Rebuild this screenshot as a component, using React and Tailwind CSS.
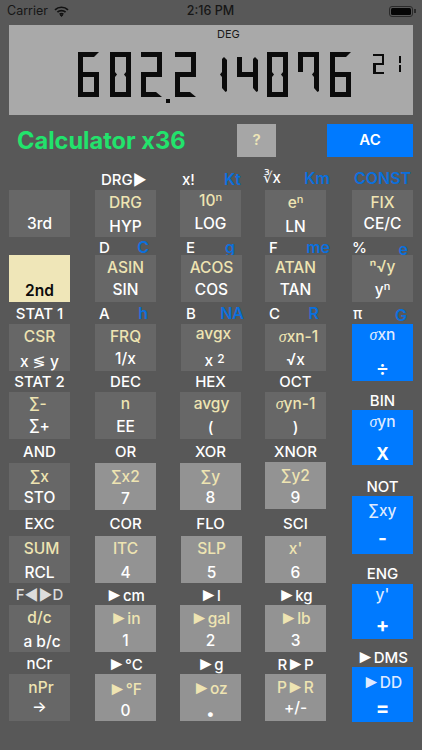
import React from "react";

const INK = "bg-[#0b0b0b]";
const STUB_L = "w-[7px] h-[5px] bg-[#0b0b0b] [clip-path:polygon(0_0,5px_0,7px_2.5px,5px_5px,0_5px)]";
const STUB_R = "w-[7px] h-[5px] bg-[#0b0b0b] [clip-path:polygon(7px_0,2px_0,0_2.5px,2px_5px,7px_5px)]";
const TAPER_TOP = "[clip-path:polygon(2px_0,5px_3px,5px_100%,0_100%,0_2px)]";
const TAPER_BOT = "[clip-path:polygon(0_0,5px_0,5px_calc(100%_-_1px),3.5px_100%,0_calc(100%_-_4px))]";
const CHAMFER_A = "[clip-path:polygon(0_0,21px_0,16px_5px,0_5px)]";
const CHAMFER_D = "[clip-path:polygon(0_0,15px_0,21px_5px,0_5px)]";

const DIGITS = {
  6: { a: CHAMFER_A, f: "", g: "", e: "", c: "", d: "" },
  0: { a: "", b: "", c: "", d: "", e: "", f: "", sl: true, sr: true },
  2: { a: "", b: "", g: "", e: "", d: CHAMFER_D },
  1: { b: TAPER_TOP, c: TAPER_BOT, sr: true },
  4: { f: "", b: TAPER_TOP, g: "", c: TAPER_BOT },
  7: { a: "", b: "", c: TAPER_BOT, f: "", sr: true },
};

function Digit({ ch, className = "" }) {
  const s = DIGITS[ch];
  const v = (k) => `w-[5px] h-full ${k in s ? `${INK} ${s[k]}` : ""}`;
  return (
    <div className={`w-[21px] h-[45px] flex flex-col shrink-0 ${className}`}>
      <div className={`h-[5px] ${"a" in s ? `${INK} ${s.a}` : ""}`} />
      <div className="h-[15px] flex justify-between">
        <div className={v("f")} />
        <div className={v("b")} />
      </div>
      {"g" in s ? (
        <div className={`h-[5px] w-full ${INK}`} />
      ) : (
        <div className="h-[5px] flex justify-between">
          <div className={s.sl ? STUB_L : ""} />
          <div className={s.sr ? STUB_R : ""} />
        </div>
      )}
      <div className="h-[15px] flex justify-between">
        <div className={v("e")} />
        <div className={v("c")} />
      </div>
      <div className={`h-[5px] ${"d" in s ? `${INK} ${s.d}` : ""}`} />
    </div>
  );
}

function SmallDigit({ ch, className = "" }) {
  const on = ch === "2" ? "abged" : "bc";
  const bar = (k) => (on.includes(k) ? INK : "");
  return (
    <div className={`w-[11px] h-[20px] flex flex-col shrink-0 ${className}`}>
      <div className={`h-[2px] ${bar("a")}`} />
      <div className="h-[7px] flex justify-between">
        <div className={`w-[2.5px] ${bar("f")}`} />
        <div className={`w-[2.5px] ${bar("b")}`} />
      </div>
      <div className={`h-[2px] ${bar("g")}`} />
      <div className="h-[7px] flex justify-between">
        <div className={`w-[2.5px] ${bar("e")}`} />
        <div className={`w-[2.5px] ${bar("c")}`} />
      </div>
      <div className={`h-[2px] ${bar("d")}`} />
    </div>
  );
}

function Key({ top, bottom, tone = "dark", className = "", a = "mt-[2px]", b = "mt-[2px]", h = "h-[47px]" }) {
  const bg =
    tone === "dark" ? "bg-[#676767]" : tone === "light" ? "bg-[#939393]" : tone === "blue" ? "bg-[#007aff]" : "bg-[#efe6b8]";
  const topColor = tone === "blue" ? "text-[#dfeaff]" : "text-[#eee4b2]";
  const botColor = tone === "cream" ? "text-[#0c0c0c]" : "text-white";
  const pad = tone === "blue" ? "" : "pt-[1px]";
  return (
    <div className={`${bg} ${h} ${pad} w-[61px] flex flex-col items-center font-medium text-[15.5px] leading-[20px] ${className}`}>
      <div className={`h-[20px] whitespace-nowrap ${a} ${topColor}`}>{top}</div>
      <div className={`h-[20px] whitespace-nowrap ${b} ${botColor}`}>{bottom}</div>
    </div>
  );
}

function Lab({ w, b, className = "", wc = "", bc = "" }) {
  return (
    <div className={`flex items-center justify-between w-[61px] h-full whitespace-nowrap font-medium text-[15px] leading-none ${className}`}>
      <span className={`text-white ${wc}`}>{w}</span>
      {b ? <span className={`text-[#0c6fdc] text-[16px] font-semibold ${bc}`}>{b}</span> : null}
    </div>
  );
}

function CLab({ children, className = "" }) {
  return (
    <div className={`flex items-center justify-center w-[61px] h-full whitespace-nowrap font-medium text-[15px] leading-none text-white ${className}`}>
      {children}
    </div>
  );
}

const Sg = () => <span className="[font-family:'Liberation_Serif',serif] italic text-[16px]">σ</span>;
const Sup = ({ children }) => <span className="text-[11px] relative -top-[5px]">{children}</span>;
const Tr = () => <span className="[font-family:'Liberation_Sans',sans-serif] text-[19px] leading-none -mx-[1px]">►</span>;
const COLS5 = "grid grid-cols-[86px_86px_84px_87px_61px]";
const COLS4 = "grid grid-cols-[86px_86px_84px_87px]";

export default function App() {
  return (
    <div className="w-[422px] h-[750px] bg-[#585858] overflow-hidden flex flex-col [font-family:Inter,'DejaVu_Sans',sans-serif]">
      {/* status bar */}
      <div className="h-[22px] shrink-0 flex items-center justify-between pl-[7px] pr-[6px] text-[12.5px] text-[#161616]">
        <div className="flex items-center gap-[6px] w-[120px]">
          <span>Carrier</span>
          <svg width="15" height="11" viewBox="0 0 15 11" fill="none" stroke="#111" strokeWidth="1.7">
            <path d="M1 3.8 C4.6 .4 10.4 .4 14 3.8" />
            <path d="M3.4 6.2 C5.7 4 9.3 4 11.6 6.2" />
            <path d="M5.6 8.4 C6.7 7.4 8.3 7.4 9.4 8.4" />
            <path d="M6.2 9 L7.5 10.6 L8.8 9 Z" fill="#111" strokeWidth="0.8" />
          </svg>
        </div>
        <span className="font-medium ml-[-2px]">2:16 PM</span>
        <div className="w-[120px] flex justify-end items-center">
          <div className="w-[24px] h-[11px] rounded-[3px] border border-[#2a2a2a] p-[1px]">
            <div className="w-full h-full bg-[#060606] rounded-[1.5px]" />
          </div>
          <div className="w-[1.5px] h-[4px] bg-[#2a2a2a] ml-[1px]" />
        </div>
      </div>

      {/* display */}
      <div className="ml-[9px] mt-[3px] w-[404px] h-[90px] shrink-0 bg-[#a9a9a9] flex flex-col">
        <div className="h-[14px] mt-[2px] pl-[208px] text-[11px] leading-[14px] text-[#1a1a1a]">DEG</div>
        <div className="mt-[11px] pl-[69px] flex items-start" role="img" aria-label="602.214076 e21">
          <Digit ch="6" className="mr-[11px]" />
          <Digit ch="0" className="mr-[10px]" />
          <Digit ch="2" />
          <div className="w-[13px] h-[45px] flex flex-col justify-end pl-[4px] shrink-0">
            <div className="w-[4px] h-[4px] bg-[#0b0b0b] shrink-0 mb-[-6px]" />
          </div>
          <Digit ch="2" className="mr-[10px]" />
          <Digit ch="1" className="mr-[10px]" />
          <Digit ch="4" className="mr-[9px]" />
          <Digit ch="0" className="mr-[10px]" />
          <Digit ch="7" className="mr-[11px]" />
          <Digit ch="6" className="mr-[22px]" />
          <SmallDigit ch="2" className="mt-[2px] mr-[6px]" />
          <SmallDigit ch="1" className="mt-[2px]" />
        </div>
      </div>

      {/* title row */}
      <div className="mt-[9px] h-[33px] shrink-0 flex items-center pl-[17px]">
        <div className="w-[220px] text-[23.6px] font-bold text-[#22e36c] leading-none whitespace-nowrap">Calculator x36</div>
        <div className="w-[39px] h-[33px] bg-[#a6a6a6] flex items-center justify-center text-[#efe6b8] font-semibold text-[15px]">?</div>
        <div className="ml-[51px] w-[86px] h-[33px] bg-[#007aff] flex items-center justify-center text-white font-semibold text-[15px]">AC</div>
      </div>

      {/* keypad */}
      <div className="mt-[11px] pl-[9px] flex flex-col">
        <div className={`${COLS5} h-[22px]`}>
          <div />
          <Lab w="DRG▶" className="pl-[6px]" />
          <Lab w="x!" b="Kt" className="pl-[1px] pr-[1px]" />
          <Lab w="∛x" b="Km" className="-ml-[2px] w-[67px] -mt-[2px]" bc="mt-[2px]" />
          <CLab className="!text-[#0c6fdc] font-semibold !text-[16px] -mt-[1px]">CONST</CLab>
        </div>
        <div className={COLS5}>
          <Key top="" bottom="3rd" b="mt-[1px]" />
          <Key top="DRG" bottom="HYP" b="mt-[4px]" />
          <Key top={<span>10<Sup>n</Sup></span>} bottom="LOG" className="-ml-[1px]" a="mt-0" b="mt-[3px]" />
          <Key top={<span>e<Sup>n</Sup></span>} bottom="LN" b="mt-[4px]" />
          <Key top="FIX" bottom="CE/C" b="mt-[1px]" />
        </div>
        <div className={`${COLS5} h-[18px]`}>
          <div />
          <Lab w="D" b="C" className="pl-[4px] pr-[7px]" />
          <Lab w="E" b="g" className="pl-[5px] pr-[7px]" />
          <Lab w="F" b="me" className="pl-[4px] w-[65px]" />
          <Lab w="%" b="e" className="pr-[5px]" bc="mt-[4px]" />
        </div>
        <div className={COLS5}>
          <Key tone="cream" top="" bottom={<span className="font-semibold">2nd</span>} b="mt-[3px]" />
          <Key top="ASIN" bottom="SIN" />
          <Key top="ACOS" bottom="COS" />
          <Key top="ATAN" bottom="TAN" />
          <Key top="ⁿ√y" bottom={<span>y<Sup>n</Sup></span>} a="mt-[1px]" b="mt-[3px]" />
        </div>

        <div className="flex">
          <div className="w-[343px] flex flex-col">
            <div className={`${COLS4} h-[22px]`}>
              <CLab>STAT 1</CLab>
              <Lab w="A" b="h" className="pl-[4px] pr-[8px]" />
              <Lab w="B" b="NA" className="pl-[5px] w-[63px]" />
              <Lab w="C" b="R" className="pl-[4px] pr-[7px]" />
            </div>
            <div className={COLS4}>
              <Key top="CSR" bottom="x ≶ y" b="mt-[5px]" />
              <Key top="FRQ" bottom="1/x" />
              <Key top="avgx" bottom={<span>x <span className="text-[12px] relative -top-[3px]">2</span></span>} a="-mt-[1px] ml-[4px]" b="mt-[7px] ml-[6px]" />
              <Key top={<span><Sg />xn-1</span>} bottom="√x" a="mt-[2px] ml-[6px]" b="mt-[3px]" />
            </div>
            <div className={`${COLS4} h-[21px]`}>
              <CLab>STAT 2</CLab>
              <CLab>DEC</CLab>
              <CLab className="-ml-[1px]">HEX</CLab>
              <CLab>OCT</CLab>
            </div>
            <div className={COLS4}>
              <Key top="∑-" bottom="∑+" a="mt-[1px] -ml-[3px]" b="mt-[2px]" />
              <Key top="n" bottom="EE" a="mt-[1px]" b="mt-[3px]" />
              <Key top="avgy" bottom="(" className="-ml-[1px]" a="mt-[1px] ml-[2px]" b="mt-[4px]" />
              <Key top={<span><Sg />yn-1</span>} bottom=")" a="mt-[1px]" b="mt-[4px]" />
            </div>
            <div className={`${COLS4} h-[24px]`}>
              <CLab>AND</CLab>
              <CLab>OR</CLab>
              <CLab className="-ml-[1px]">XOR</CLab>
              <CLab>XNOR</CLab>
            </div>
            <div className={COLS4}>
              <Key top="∑x" bottom="STO" a="mt-[3px]" b="mt-[1px]" />
              <Key tone="light" top="∑x2" bottom="7" a="mt-[3px]" />
              <Key tone="light" top="∑y" bottom="8" className="-ml-[1px]" a="mt-[3px]" b="mt-[1px]" />
              <Key tone="light" top="∑y2" bottom="9" className="-mt-[1px]" a="mt-[3px]" />
            </div>
            <div className={`${COLS4} h-[26px]`}>
              <CLab>EXC</CLab>
              <CLab>COR</CLab>
              <CLab className="-ml-[1px]">FLO</CLab>
              <CLab>SCI</CLab>
            </div>
            <div className={COLS4}>
              <Key top="SUM" bottom="RCL" a="mt-[2px] ml-[4px]" b="mt-[4px]" />
              <Key tone="light" top="ITC" bottom="4" b="mt-[4px]" />
              <Key tone="light" top="SLP" bottom="5" b="mt-[4px]" />
              <Key tone="light" top="x'" bottom="6" b="mt-[4px]" />
            </div>
            <div className={`${COLS4} h-[22px]`}>
              <CLab className="!text-[#dddddd]">F◄►D</CLab>
              <CLab><span><Tr />cm</span></CLab>
              <CLab className="-ml-[1px]"><span><Tr />l</span></CLab>
              <CLab><span><Tr />kg</span></CLab>
            </div>
            <div className={COLS4}>
              <Key top="d/c" bottom="a b/c" b="mt-[4px] ml-[5px]" />
              <Key tone="light" top={<span><Tr />in</span>} bottom="1" b="mt-[3px]" />
              <Key tone="light" top={<span><Tr />gal</span>} bottom="2" className="-ml-[1px]" b="mt-[3px]" />
              <Key tone="light" top={<span><Tr />lb</span>} bottom="3" b="mt-[3px]" />
            </div>
            <div className={`${COLS4} h-[22px]`}>
              <CLab>nCr</CLab>
              <CLab><span><Tr />°C</span></CLab>
              <CLab className="-ml-[1px]"><span><Tr />g</span></CLab>
              <CLab><span>R<Tr />P</span></CLab>
            </div>
            <div className={COLS4}>
              <Key top="nPr" bottom="→" a="mt-[3px] ml-[3px]" b="-mt-[1px]" />
              <Key tone="light" top={<span><Tr />°F</span>} bottom="0" a="mt-[4px]" b="mt-[2px]" />
              <Key tone="light" top={<span><Tr />oz</span>} bottom="•" className="-ml-[1px]" a="mt-[3px]" b="mt-[6px]" />
              <Key tone="light" top={<span>P<Tr />R</span>} bottom="+/-" a="mt-[2px]" b="mt-[1px]" />
            </div>
          </div>

          <div className="w-[61px] flex flex-col">
            <Lab w="π" b="G" className="!h-[22px] pl-[1px] pr-[6px]" bc="mt-[4px]" />
            <Key tone="blue" h="h-[57px]" top={<span><Sg />xn</span>} bottom={<span className="text-[20px]">÷</span>} a="mt-[1px]" b="mt-[13px]" />
            <CLab className="!h-[29px] pt-[10px]">BIN</CLab>
            <Key tone="blue" h="h-[55px]" top={<span><Sg />yn</span>} bottom={<span className="text-[17px] font-bold">X</span>} a="mt-[2px]" b="mt-[12px]" />
            <CLab className="!h-[31px] pt-[11px]">NOT</CLab>
            <Key tone="blue" h="h-[58px]" top="∑xy" bottom={<span className="text-[19px] font-bold">-</span>} a="mt-[5px]" b="mt-[8px]" />
            <CLab className="!h-[30px] pt-[9px]">ENG</CLab>
            <Key tone="blue" h="h-[55px]" top="y'" bottom={<span className="text-[20px] font-bold">+</span>} a="mt-[1px]" b="mt-[10px]" />
            <CLab className="!h-[28px] pt-[6px]"><span><Tr />DMS</span></CLab>
            <Key tone="blue" h="h-[55px]" top={<span><Tr />DD</span>} bottom={<span className="text-[20px] font-bold">=</span>} a="mt-[5px]" b="mt-[6px]" />
          </div>
        </div>
      </div>
    </div>
  );
}
